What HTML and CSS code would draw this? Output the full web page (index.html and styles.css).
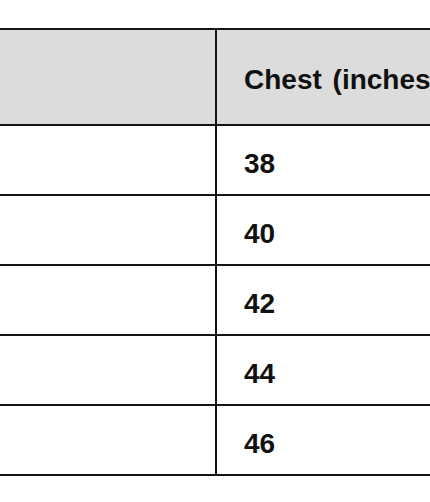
FILE: index.html
```html
<!DOCTYPE html>
<html lang="en">
<head>
<meta charset="utf-8">
<title>Size chart</title>
<link rel="stylesheet" href="styles.css">
</head>
<body>
<div class="chart">
  <div class="cell head"></div>
  <div class="cell head val">Chest (inches)</div>
  <div class="cell"></div>
  <div class="cell val">38</div>
  <div class="cell"></div>
  <div class="cell val">40</div>
  <div class="cell"></div>
  <div class="cell val">42</div>
  <div class="cell"></div>
  <div class="cell val">44</div>
  <div class="cell"></div>
  <div class="cell val">46</div>
</div>
</body>
</html>
```
FILE: styles.css
```css
html, body {
  margin: 0;
  padding: 0;
  background: #ffffff;
  overflow: hidden;
}
body {
  padding-top: 28px;
  font-family: "Liberation Sans", Arial, sans-serif;
  font-weight: bold;
  font-size: 28px;
  color: #111111;
}
.chart {
  display: grid;
  grid-template-columns: 217px 640px;
  grid-template-rows: 96px repeat(5, 70px);
  border-top: 2px solid #141414;
  width: max-content;
}
.cell {
  box-sizing: border-box;
  border-bottom: 2px solid #141414;
  padding-top: 24px;
  line-height: 28px;
  white-space: nowrap;
}
.cell:nth-child(odd) {
  border-right: 2px solid #141414;
}
.head {
  background: #dcdcdc;
  padding-top: 36px;
}
.val {
  padding-left: 27px;
  word-spacing: 3px;
}
```
